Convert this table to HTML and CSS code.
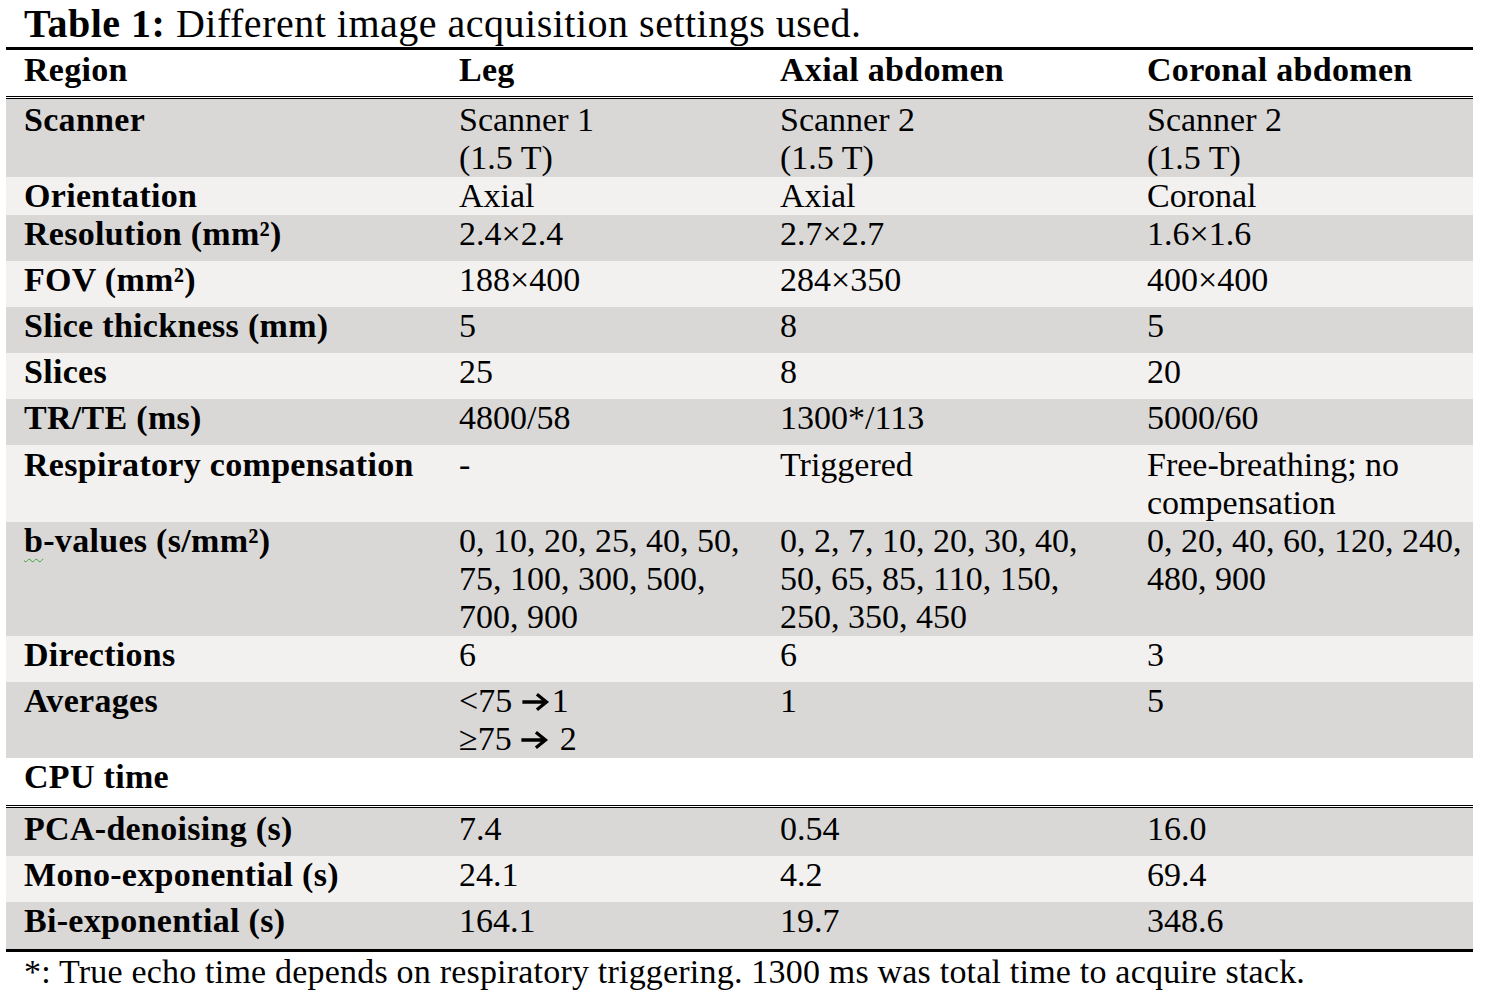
FILE: index.html
```html
<!DOCTYPE html>
<html lang="en">
<head>
<meta charset="utf-8">
<title>Table 1</title>
<link rel="stylesheet" href="styles.css">
</head>
<body>
<div class="title"><b>Table 1:</b> Different image acquisition settings used.</div>
<table class="acq">
  <colgroup>
    <col class="c1"><col class="c2"><col class="c3"><col class="c4">
  </colgroup>
  <thead>
    <tr class="head">
      <th>Region</th><th>Leg</th><th>Axial abdomen</th><th>Coronal abdomen</th>
    </tr>
  </thead>
  <tbody>
    <tr class="dark multi top2">
      <th>Scanner</th><td>Scanner 1<br>(1.5 T)</td><td>Scanner 2<br>(1.5 T)</td><td>Scanner 2<br>(1.5 T)</td>
    </tr>
    <tr class="light tight">
      <th>Orientation</th><td>Axial</td><td>Axial</td><td>Coronal</td>
    </tr>
    <tr class="dark">
      <th>Resolution (mm²)</th><td>2.4×2.4</td><td>2.7×2.7</td><td>1.6×1.6</td>
    </tr>
    <tr class="light">
      <th>FOV (mm²)</th><td>188×400</td><td>284×350</td><td>400×400</td>
    </tr>
    <tr class="dark">
      <th>Slice thickness (mm)</th><td>5</td><td>8</td><td>5</td>
    </tr>
    <tr class="light">
      <th>Slices</th><td>25</td><td>8</td><td>20</td>
    </tr>
    <tr class="dark">
      <th>TR/TE (ms)</th><td>4800/58</td><td>1300*/113</td><td>5000/60</td>
    </tr>
    <tr class="light multi top1">
      <th>Respiratory compensation</th><td>-</td><td>Triggered</td><td>Free-breathing; no<br>compensation</td>
    </tr>
    <tr class="dark multi">
      <th><span class="squiggle">b</span>-values (s/mm²)</th><td>0, 10, 20, 25, 40, 50,<br>75, 100, 300, 500,<br>700, 900</td><td>0, 2, 7, 10, 20, 30, 40,<br>50, 65, 85, 110, 150,<br>250, 350, 450</td><td>0, 20, 40, 60, 120, 240,<br>480, 900</td>
    </tr>
    <tr class="light">
      <th>Directions</th><td>6</td><td>6</td><td>3</td>
    </tr>
    <tr class="dark multi">
      <th>Averages</th>
      <td>&lt;75 <svg class="arrow" viewBox="0 0 32 22" width="32" height="22" aria-hidden="true"><path d="M1 11H27M17 2.5L27.5 11L17 19.5" fill="none" stroke="#000" stroke-width="3.6" stroke-linejoin="miter"/></svg>1<br>≥75 <svg class="arrow" viewBox="0 0 32 22" width="32" height="22" aria-hidden="true"><path d="M1 11H27M17 2.5L27.5 11L17 19.5" fill="none" stroke="#000" stroke-width="3.6" stroke-linejoin="miter"/></svg> 2</td>
      <td>1</td><td>5</td>
    </tr>
    <tr class="white section">
      <th>CPU time</th><td></td><td></td><td></td>
    </tr>
    <tr class="dark top2">
      <th>PCA-denoising (s)</th><td>7.4</td><td>0.54</td><td>16.0</td>
    </tr>
    <tr class="light">
      <th>Mono-exponential (s)</th><td>24.1</td><td>4.2</td><td>69.4</td>
    </tr>
    <tr class="dark last">
      <th>Bi-exponential (s)</th><td>164.1</td><td>19.7</td><td>348.6</td>
    </tr>
  </tbody>
</table>
<div class="note">*: True echo time depends on respiratory triggering. 1300 ms was total time to acquire stack.</div>
</body>
</html>
```

FILE: styles.css
```css
html, body {
  margin: 0;
  padding: 0;
  background: #ffffff;
}

body {
  font-family: "Liberation Serif", "Times New Roman", serif;
  color: #000;
  width: 1490px;
}

.title {
  font-size: 40px;
  line-height: 45px;
  height: 45px;
  padding: 1px 0 1px 24px;
  letter-spacing: 0.5px;
  white-space: nowrap;
  overflow: hidden;
}

.acq {
  margin-left: 6px;
  width: 1467px;
  table-layout: fixed;
  border-collapse: separate;
  border-spacing: 0;
  border-top: 3px solid #000;
  border-bottom: 3px solid #000;
  font-size: 34px;
  line-height: 38px;
}

.c1 { width: 435px; }
.c2 { width: 321px; }
.c3 { width: 367px; }
.c4 { width: 344px; }

.acq th,
.acq td {
  text-align: left;
  vertical-align: top;
  padding: 0 10px 8px 18px;
  white-space: nowrap;
}

.acq th {
  font-weight: bold;
  letter-spacing: 0.3px;
}

.head th {
  padding-top: 1px;
  padding-bottom: 7px;
  border-bottom: 3px double #000;
}

.dark { background: #d9d8d7; }
.light { background: #f2f1f0; }
.white { background: #ffffff; }

.acq tr.multi th,
.acq tr.multi td {
  padding-bottom: 0;
}

.acq tr.top2 th,
.acq tr.top2 td {
  padding-top: 2px;
}

.acq tr.top1 th,
.acq tr.top1 td {
  padding-top: 1px;
}

.acq tr.tight th,
.acq tr.tight td {
  padding-top: 0;
  padding-bottom: 0;
}

.acq tr.section th,
.acq tr.section td {
  padding-bottom: 9px;
  border-bottom: 3px double #000;
}

.acq tr.last th,
.acq tr.last td {
  padding-bottom: 9px;
}

.squiggle {
  text-decoration: underline wavy #3aa53a;
  text-decoration-thickness: 1px;
  text-underline-offset: 6px;
}

.arrow {
  display: inline-block;
  width: 30px;
  height: 20px;
  vertical-align: 0;
  margin-right: 1px;
}

.note {
  font-size: 34px;
  line-height: 40px;
  padding-left: 24px;
  letter-spacing: 0.2px;
  white-space: nowrap;
}
```
